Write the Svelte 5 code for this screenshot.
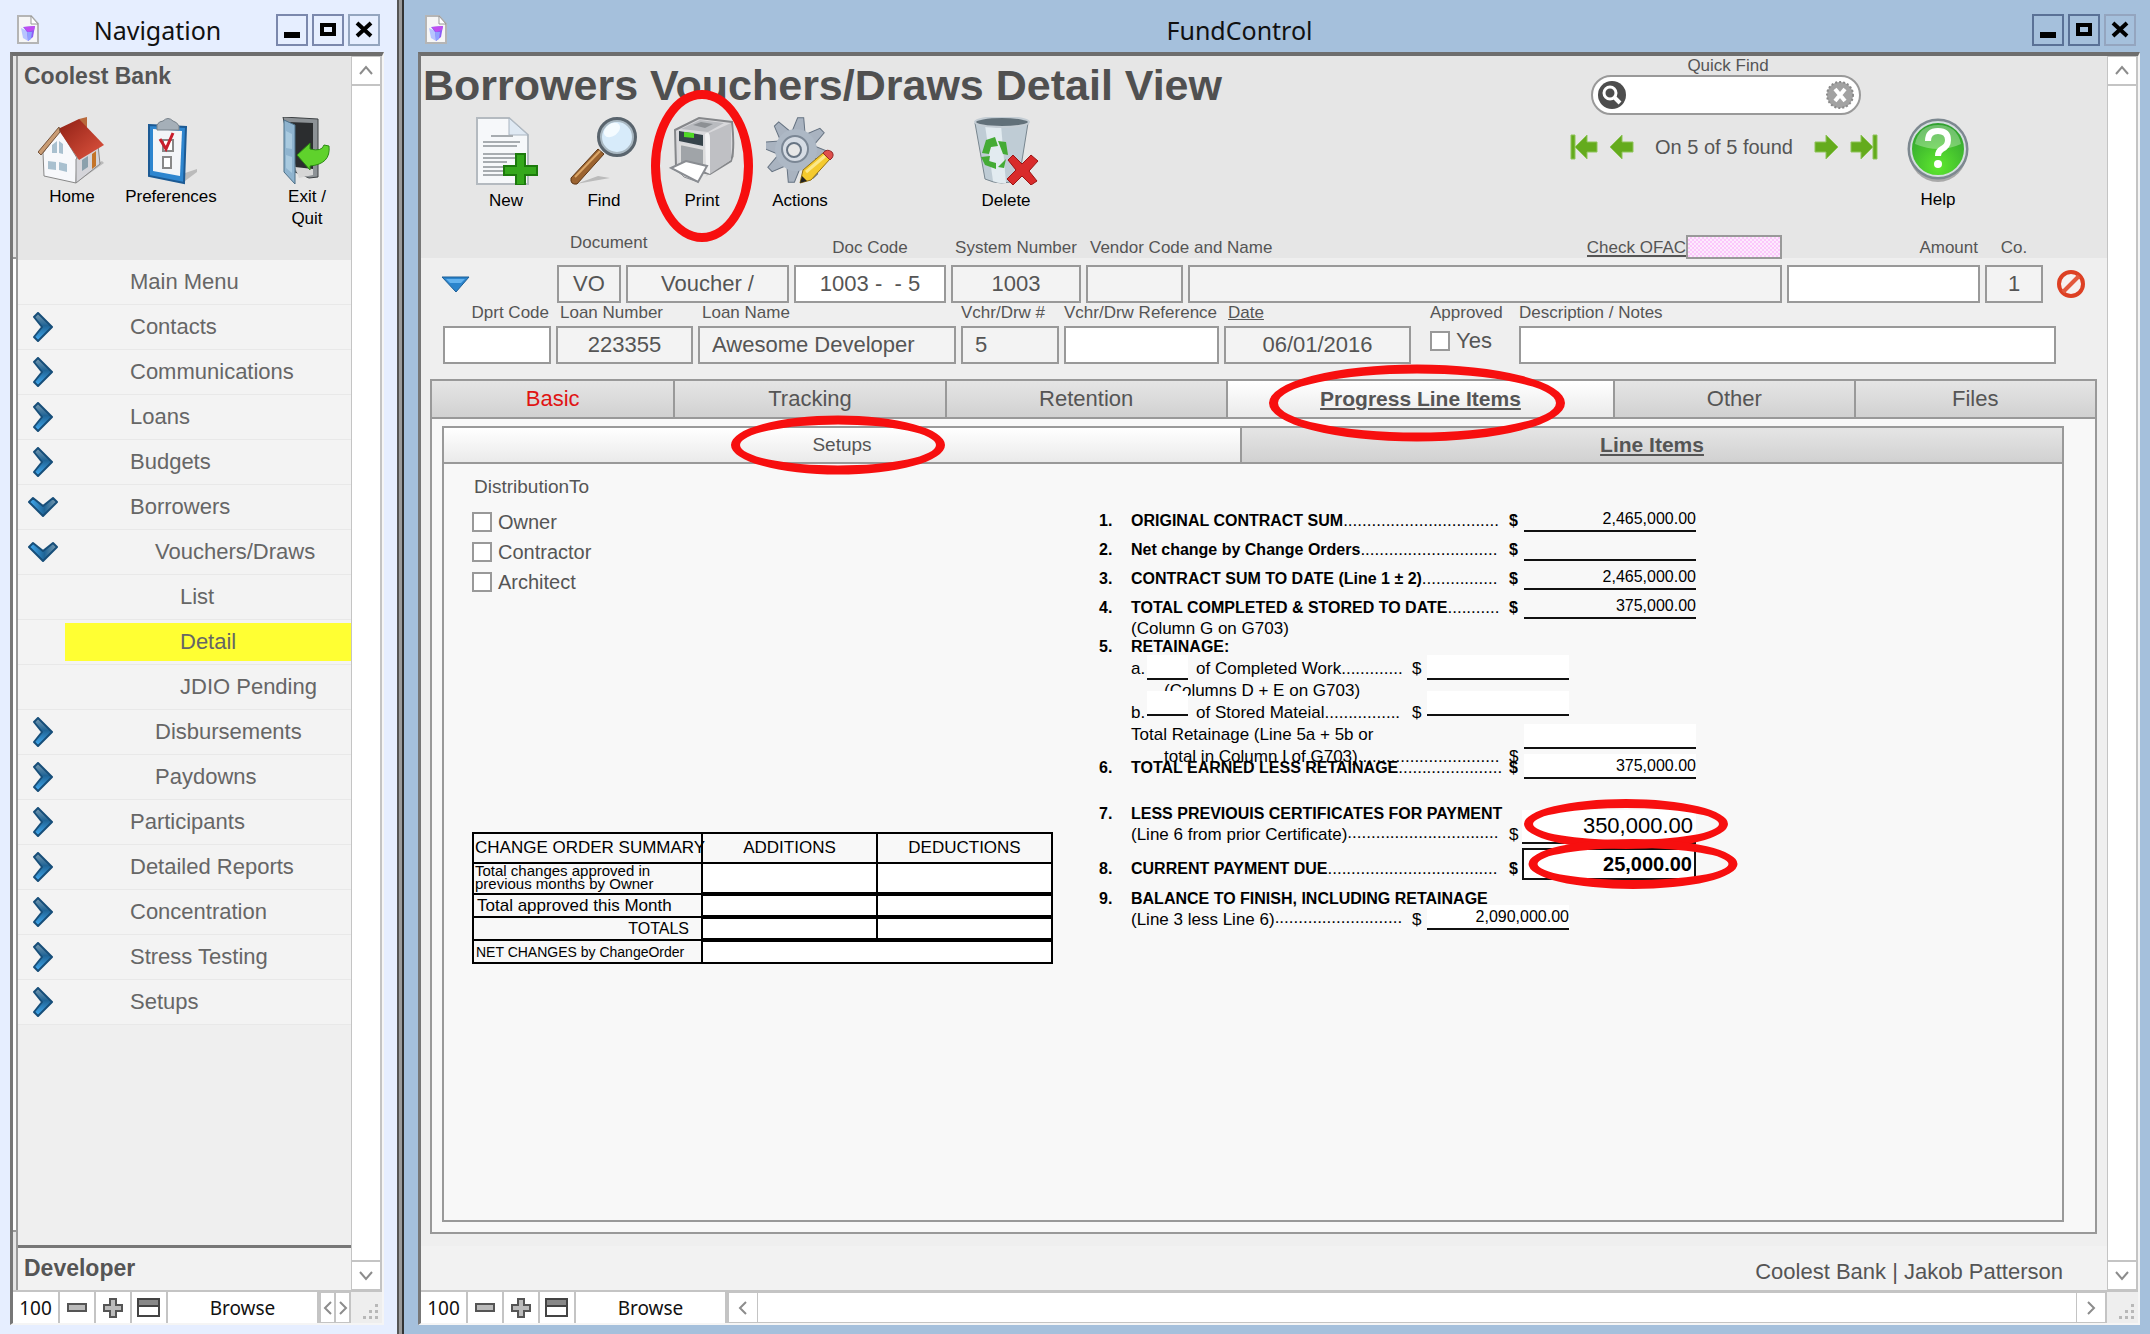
<script>
  let menu = [
    { label: 'Main Menu', level: 0, arrow: '' },
    { label: 'Contacts', level: 0, arrow: 'right' },
    { label: 'Communications', level: 0, arrow: 'right' },
    { label: 'Loans', level: 0, arrow: 'right' },
    { label: 'Budgets', level: 0, arrow: 'right' },
    { label: 'Borrowers', level: 0, arrow: 'down' },
    { label: 'Vouchers/Draws', level: 1, arrow: 'down' },
    { label: 'List', level: 2, arrow: '' },
    { label: 'Detail', level: 2, arrow: '' },
    { label: 'JDIO Pending', level: 2, arrow: '' },
    { label: 'Disbursements', level: 1, arrow: 'right' },
    { label: 'Paydowns', level: 1, arrow: 'right' },
    { label: 'Participants', level: 0, arrow: 'right' },
    { label: 'Detailed Reports', level: 0, arrow: 'right' },
    { label: 'Concentration', level: 0, arrow: 'right' },
    { label: 'Stress Testing', level: 0, arrow: 'right' },
    { label: 'Setups', level: 0, arrow: 'right' },
  ];
  let current = $state('Detail');

  let tabs = ['Basic', 'Tracking', 'Retention', 'Progress Line Items', 'Other', 'Files'];
  let activeTab = $state('Progress Line Items');
  let activeSub = $state('Setups');

  const teeth = [0, 45, 90, 135, 180, 225, 270, 315];
  const dots = (n) => '.'.repeat(n);
</script>

{#snippet fileIcon()}
  <svg class="file-icon" width="22" height="30" viewBox="0 0 22 30" aria-hidden="true">
    <path d="M1 1h13l7 8v19H1z" fill="#f6f6f6" stroke="#b5b5b5" stroke-width="2" />
    <path d="M14 1v8h7z" fill="#fff" stroke="#999" />
    <path d="M4 13l6 3 1 10-5-3z" fill="#b7c4ff" />
    <path d="M6 12l12-1-2 11-5 4-1-9z" fill="#8b5cf6" />
    <path d="M7 12l11-1-1 4-6 2z" fill="#c04df0" />
    <path d="M10 17l5 0-1 7-3 2z" fill="#8fa2ff" />
  </svg>
{/snippet}

{#snippet winButtons()}
  <div class="win-buttons">
    <button aria-label="Minimize"><svg width="28" height="28"><path d="M6 16h16v6H6z" /></svg></button>
    <button aria-label="Maximize"><svg width="28" height="28"><path d="M6 7h16v13H6zM10 11v5h8v-5z" fill-rule="evenodd" /></svg></button>
    <button class="close" aria-label="Close"><svg width="28" height="28"><path d="M7 7l14 13M21 7L7 20" stroke="#000" stroke-width="4" /></svg></button>
  </div>
{/snippet}

{#snippet scrollbar()}
  <div class="scrollbar">
    <button aria-label="Scroll up"><svg width="16" height="12"><path d="M2 9l6-7 6 7" /></svg></button>
    <button aria-label="Scroll down"><svg width="16" height="12"><path d="M2 2l6 7 6-7" /></svg></button>
  </div>
{/snippet}

{#snippet zoomTools()}
  <span class="zoom">100</span>
  <button aria-label="Zoom out"><svg width="20" height="10"><rect x="1" y="1" width="18" height="7" fill="#bbb" stroke="#555" stroke-width="2" /></svg></button>
  <button aria-label="Zoom in"><svg width="20" height="20"><path d="M7 1h6v6h6v6h-6v6H7v-6H1V7h6z" fill="#bbb" stroke="#555" stroke-width="2" /></svg></button>
  <button aria-label="Toggle toolbar"><svg width="24" height="20"><rect x="1" y="1" width="21" height="17" fill="#fff" stroke="#444" stroke-width="2" /><path d="M2 2h19v5H2z" fill="#888" /><path d="M1 8h21" stroke="#444" stroke-width="2" /></svg></button>
  <button class="mode">Browse</button>
{/snippet}

{#snippet corner()}
  <svg class="corner" width="31" height="31" aria-hidden="true">
    {#each [[24, 12], [18, 18], [24, 18], [12, 24], [18, 24], [24, 24]] as [x, y]}
      <rect {x} {y} width="3" height="3" fill="#b8b8b8" />
    {/each}
  </svg>
{/snippet}

<div class="desktop">
  <!-- Navigation window -->
  <section class="window nav">
    <header class="titlebar">
      {@render fileIcon()}
      <span class="wintitle">Navigation</span>
      {@render winButtons()}
    </header>
    <div class="frame">
      <div class="view">
        <div class="rail"><i></i><b></b><i class="short"></i></div>
        <div class="nav-body">
          <div class="nav-head">
            <h2>Coolest Bank</h2>
            <div class="nav-tools">
              <button class="tool home">
                <svg width="68" height="68" viewBox="0 0 68 68">
                  <defs>
                    <linearGradient id="roof" x1="0" y1="0" x2="1" y2="1"><stop offset="0" stop-color="#8e1f14" /><stop offset="1" stop-color="#e05540" /></linearGradient>
                  </defs>
                  <path d="M38 66l28-20-2-2-26 14z" fill="#bbb" />
                  <path d="M41 2l8-2v12l-8-4z" fill="#b96a3c" />
                  <path d="M5 36L22 13l17 28-1 25L6 59z" fill="#f7f8fb" stroke="#888" />
                  <path d="M38 42l22-14 2 19-24 19z" fill="#d5d5da" stroke="#888" />
                  <path d="M20 12L41 2l25 26-25 15z" fill="url(#roof)" />
                  <path d="M21 10L0 35l3 3L22 15z" fill="#c99c74" stroke="#76543c" />
                  <path d="M14 28l5-4v12h-5zM21 24l4 3v10l-4-1zM10 44l8 1v8l-8-1zM21 45l8 2v8l-8-2z" fill="#a9c0cf" />
                  <path d="M44 43l6-4v11l-6 4z" fill="#8aa0ac" /><path d="M54 37l4-3v15l-4 3z" fill="#c47428" />
                </svg>
                Home
              </button>
              <button class="tool prefs">
                <svg width="52" height="68" viewBox="0 0 52 68">
                  <path d="M40 64l12-9v-3l-12 4z" fill="#bbb" />
                  <path d="M4 8l37 2-2 56L4 59z" fill="#2f86cf" stroke="#1c5a94" stroke-width="2" />
                  <path d="M8 12l29 2-2 45-27-5z" fill="#f3f5f8" />
                  <path d="M12 8q2-4 6-4 5-5 10 0 4 1 6 5v4H12z" fill="#a5afb8" stroke="#77818a" />
                  <path d="M18 23h10v11H18zM18 40h8v11h-8z" fill="#fff" stroke="#888" stroke-width="2" />
                  <path d="M15 22l6 10 7-16" fill="none" stroke="#c81e2c" stroke-width="3" />
                </svg>
                Preferences
              </button>
              <button class="tool exit">
                <svg width="50" height="68" viewBox="0 0 50 68">
                  <path d="M1 0l35 2v58l-9 1-14-6z" fill="#8d9296" stroke="#3c4043" />
                  <path d="M6 5l25 1v49l-17-3z" fill="#2b2d2f" />
                  <path d="M13 50l18 2v6l-14 3z" fill="#d6d6d6" />
                  <path d="M2 3l11 5v59L2 55z" fill="#8fb4cf" stroke="#4d7088" />
                  <path d="M4 14l6 3v15l-6-1zM4 38l6 2v16l-6-5z" fill="#a9cadf" />
                  <path d="M15 38l13-12v6q12 3 14-4l5 1q2 18-19 20v4z" fill="#5fd22c" stroke="#2b8a12" />
                </svg>
                Exit /<br />Quit
              </button>
            </div>
          </div>
          <nav>
            {#each menu as item}
              <button class="row" onclick={() => (current = item.label)}>
                <span class="chev">
                  {#if item.arrow}
                    <svg width="30" height="30" viewBox="0 0 30 30" class={item.arrow}>
                      <defs><linearGradient id="chev" x1="0" y1="0" x2="0" y2="1"><stop offset="0" stop-color="#7c9cb0" /><stop offset="0.45" stop-color="#1f6496" /><stop offset="1" stop-color="#43aef5" /></linearGradient></defs>
                      <path d="M6 5l4-4 14 14-14 14-4-4 8-10z" fill="url(#chev)" stroke="#174e79" stroke-width="2" stroke-linejoin="round" />
                    </svg>
                  {/if}
                </span>
                <span class="item level{item.level}" class:current={item.label === current}>{item.label}</span>
              </button>
            {/each}
          </nav>
          <footer>Developer</footer>
        </div>
        {@render scrollbar()}
      </div>
      <div class="status">
        {@render zoomTools()}
        <div class="hscroll small">
          <button aria-label="Scroll left"><svg width="10" height="16"><path d="M8 2L2 8l6 6" /></svg></button>
          <button aria-label="Scroll right"><svg width="10" height="16"><path d="M2 2l6 6-6 6" /></svg></button>
        </div>
        {@render corner()}
      </div>
    </div>
  </section>

  <div class="divider"></div>

  <!-- FundControl window -->
  <section class="window fund">
    <header class="titlebar">
      {@render fileIcon()}
      <span class="wintitle">FundControl</span>
      {@render winButtons()}
    </header>
    <div class="frame">
      <div class="view">
        <div class="layout">
          <div class="head">
            <div>
              <h1>Borrowers Vouchers/Draws Detail View</h1>
              <div class="toolbar">
                <button class="tool">
                  <svg width="64" height="68" viewBox="0 0 64 68">
                    <path d="M3 1h32l19 17v49H3z" fill="#f6f8fa" stroke="#b4bac0" stroke-width="2" />
                    <path d="M35 1v17h19z" fill="#dfe9f3" stroke="#aab5c0" />
                    <path d="M17 19h22M9 25h37M9 29h34M9 37h36M9 41h32M9 45h24M9 50h22M9 54h22M9 58h22" stroke="#a7acb0" stroke-width="2" />
                    <path d="M42 37h9v12h12v9H51v10h-9V58H30v-9h12z" fill="#35a81c" stroke="#1c7a0c" stroke-width="2" />
                  </svg>
                  New
                </button>
                <button class="tool">
                  <svg width="68" height="68" viewBox="0 0 68 68">
                    <path d="M6 67l34-6-12-2z" fill="#bbb" />
                    <path d="M1 61L28 32l6 5L7 67q-7 1-6-6z" fill="#9b6330" stroke="#5e3716" />
                    <path d="M5 60l25-26" stroke="#dba668" stroke-width="2" />
                    <circle cx="47" cy="20" r="18" fill="#d7ebfa" stroke="#59646d" stroke-width="4" />
                    <circle cx="47" cy="20" r="16" fill="none" stroke="#a9b8c2" stroke-width="2" />
                    <ellipse cx="42" cy="13" rx="9" ry="6" fill="#f4fbff" transform="rotate(-35 42 13)" />
                  </svg>
                  Find
                </button>
                <button class="tool">
                  <svg width="66" height="68" viewBox="0 0 66 68">
                    <path d="M36 60l29-20v-8z" fill="#bbb" />
                    <path d="M6 13L30 1l33 4q3 28-1 39L41 57l-34-7z" fill="#d9d9dc" stroke="#85878a" stroke-width="2" />
                    <path d="M12 12L31 3l24 3-16 9z" fill="#b9bbbf" />
                    <path d="M24 8l8-3 12 2-8 4z" fill="#8d9094" />
                    <path d="M40 16l22-10v37L41 57z" fill="#bfc0c4" />
                    <path d="M10 14l24 4v11l-24-5z" fill="#36434a" />
                    <path d="M15 15l10 1v5l-10-1z" fill="#4fd926" />
                    <path d="M11 27l24 5v21l-24-6z" fill="#a0a4a8" stroke="#ddd" stroke-width="2" />
                    <path d="M36 17q5-4 5 5v35l-4-2z" fill="#f2f2f3" />
                    <path d="M2 51l15-7 21 5-9 16z" fill="#fff" stroke="#8a8d92" stroke-width="2" />
                    <path d="M2 51q10 5 13 9l14 5" fill="none" stroke="#8a8d92" />
                  </svg>
                  Print
                  <span class="ring ring-print"></span>
                </button>
                <button class="tool">
                  <svg width="68" height="68" viewBox="0 0 68 68">
                    <g fill="#a9b3c0" stroke="#667382">
                      {#each teeth as angle}
                        <path d="M23 15l3-14 6-1 4 15z" transform="rotate({angle + 10} 30 33)" />
                      {/each}
                    </g>
                    <circle cx="30" cy="33" r="21" fill="#adb8c5" />
                    <circle cx="29" cy="32" r="13" fill="#d6dce4" stroke="#7b8795" stroke-width="2" />
                    <circle cx="28" cy="33" r="7" fill="#e7e7e7" stroke="#677483" stroke-width="2" />
                    <path d="M34 66l3-13 20-17 7 6-19 21z" fill="#f4ca2e" stroke="#937012" />
                    <path d="M40 55l19-16" stroke="#fbe88a" stroke-width="3" />
                    <path d="M34 66l2-7 5 5z" fill="#222" />
                    <path d="M57 36q4-5 9-1 3 4-2 8z" fill="#e0504c" stroke="#952a2a" />
                  </svg>
                  Actions
                </button>
                <button class="tool delete">
                  <svg width="66" height="68" viewBox="0 0 66 68">
                    <path d="M2 6l10 56q17 8 34 0L55 6z" fill="#bfccd5" stroke="#78868f" />
                    <path d="M12 8l8 56q6 3 13 2L28 8z" fill="#e2ebf0" />
                    <ellipse cx="29" cy="5" rx="27" ry="5" fill="#617079" stroke="#c4cdd4" stroke-width="2" />
                    <path d="M13 23l9-3 3 9-7 1-2 7-7-1zM25 24l8 1 2 13-5-1zM8 40l9-1-1 5 7 2v6l-11-4zM25 50l8-8-2 9z" fill="#44ab35" />
                    <path d="M35 43l5-5 9 9 9-9 7 6-9 10 8 10-6 4-9-9-9 9-6-6 9-9z" fill="#d92b2b" stroke="#9b1414" />
                  </svg>
                  Delete
                </button>
              </div>
            </div>
            <div class="finder">
              <label for="quick">Quick Find</label>
              <div class="search">
                <svg width="30" height="30"><circle cx="15" cy="15" r="14" fill="#4d4d4d" /><circle cx="13" cy="13" r="6" fill="none" stroke="#fff" stroke-width="3" /><path d="M17 17l6 6" stroke="#fff" stroke-width="4" /></svg>
                <input id="quick" type="text" />
                <button aria-label="Clear"><svg width="30" height="30"><circle cx="15" cy="15" r="13" fill="#a2a2a2" stroke="#8a8a8a" stroke-width="2" stroke-dasharray="2 2" /><path d="M10 9l10 12M20 9L10 21" stroke="#fff" stroke-width="4" /></svg></button>
              </div>
              <div class="pager">
                <button aria-label="First"><svg width="28" height="26"><path d="M1 1h4v24H1zM5 13L17 1v7h10v10H17v7z" fill="#64ab1d" stroke="#8fc45b" /></svg></button>
                <button aria-label="Previous"><svg width="25" height="26"><path d="M1 13L13 1v7h11v10H13v7z" fill="#64ab1d" stroke="#8fc45b" /></svg></button>
                <span>On 5 of 5 found</span>
                <button aria-label="Next"><svg width="25" height="26"><path d="M24 13L12 1v7H1v10h11v7z" fill="#64ab1d" stroke="#8fc45b" /></svg></button>
                <button aria-label="Last"><svg width="28" height="26"><path d="M23 1h4v24h-4zM23 13L11 1v7H1v10h10v7z" fill="#64ab1d" stroke="#8fc45b" /></svg></button>
              </div>
            </div>
            <button class="tool help">
              <svg width="64" height="68" viewBox="0 0 64 68">
                <defs>
                  <radialGradient id="help" cx="0.5" cy="0.8" r="0.8"><stop offset="0" stop-color="#5ee82e" /><stop offset="1" stop-color="#2b9a2f" /></radialGradient>
                </defs>
                <ellipse cx="32" cy="36" rx="29" ry="30" fill="#a9a9a9" />
                <circle cx="32" cy="33" r="29" fill="url(#help)" stroke="#7d8890" stroke-width="3" />
                <circle cx="32" cy="33" r="27" fill="none" stroke="#d5dde0" stroke-width="2" />
                <path d="M9 28q4-19 23-19t23 19q-22 10-46 0z" fill="#fff" opacity="0.3" />
                <path d="M22 25q0-10 10-10t10 9q0 6-6 9-4 2-4 7" fill="none" stroke="#fff" stroke-width="6" />
                <circle cx="32" cy="48" r="4" fill="#fff" />
              </svg>
              Help
            </button>
          </div>

          <div class="record first">
            <span></span>
            <label class="doc" for="doc-type">Document</label>
            <label class="mid" for="doc-code">Doc Code</label>
            <label class="mid" for="sys">System Number</label>
            <label for="vendor">Vendor Code and Name</label>
            <div class="ofac"><a href="#ofac">Check OFAC</a><span></span></div>
            <label class="end" for="amount">Amount</label>
            <label class="mid" for="co">Co.</label>
            <span></span>

            <button class="toggle" aria-label="Collapse"><svg width="30" height="18"><path d="M1 2h27L15 17z" fill="#2b84cc" stroke="#1d5e96" /><path d="M5 4h19l-4 4H9z" fill="#63b2ee" /></svg></button>
            <input class="ro mid" id="doc-type" value="VO" readonly />
            <input class="ro mid" aria-label="Document name" value="Voucher /" readonly />
            <input class="mid" id="doc-code" value="1003 -  - 5" />
            <input class="ro mid" id="sys" value="1003" readonly />
            <input class="ro" id="vendor" readonly />
            <input class="ro" aria-label="Vendor name" readonly />
            <input id="amount" />
            <input class="ro mid" id="co" value="1" readonly />
            <button class="void" aria-label="Void"><svg width="30" height="30"><circle cx="15" cy="15" r="12" fill="#f6f1f0" stroke="#dd4023" stroke-width="4" /><path d="M7 23L23 7" stroke="#e2583c" stroke-width="4" /></svg></button>
          </div>

          <div class="record second">
            <label class="end" for="dprt">Dprt Code</label>
            <label for="loan-no">Loan Number</label>
            <label for="loan-name">Loan Name</label>
            <label class="flush" for="draw">Vchr/Drw #</label>
            <label class="flush" for="ref">Vchr/Drw Reference</label>
            <label for="date"><u>Date</u></label>
            <span class="approved-label">Approved</span>
            <label class="flush" for="notes">Description / Notes</label>

            <input id="dprt" />
            <input class="ro mid" id="loan-no" value="223355" readonly />
            <input class="ro text" id="loan-name" value="Awesome Developer" readonly />
            <input class="ro text" id="draw" value="5" readonly />
            <input id="ref" />
            <input class="ro mid" id="date" value="06/01/2016" readonly />
            <label class="check approved"><input type="checkbox" /> Yes</label>
            <input id="notes" />
          </div>

          <div class="panel">
            <div class="tabs">
              {#each tabs as tab, i}
                <button class="tab t{i}" class:active={tab === activeTab} onclick={() => (activeTab = tab)}>
                  {tab}
                  {#if i === 3}<span class="ring ring-progress"></span>{/if}
                </button>
              {/each}
            </div>
            <div class="inner">
              <div class="subtabs">
                <button class:active={activeSub === 'Setups'} onclick={() => (activeSub = 'Setups')}>
                  Setups
                  <span class="ring ring-setups"></span>
                </button>
                <button class="strong" class:active={activeSub === 'Line Items'} onclick={() => (activeSub = 'Line Items')}>Line Items</button>
              </div>
              <div class="sheet">
                <div class="left">
                  <fieldset>
                    <legend>DistributionTo</legend>
                    <label class="check"><input type="checkbox" /> Owner</label>
                    <label class="check"><input type="checkbox" /> Contractor</label>
                    <label class="check"><input type="checkbox" /> Architect</label>
                  </fieldset>
                  <table>
                    <thead>
                      <tr><th class="summary">CHANGE ORDER SUMMARY</th><th>ADDITIONS</th><th>DEDUCTIONS</th></tr>
                    </thead>
                    <tbody>
                      <tr class="tall"><td><div class="changes">Total changes approved in previous months by Owner</div></td><td></td><td></td></tr>
                      <tr><td>Total approved this Month</td><td></td><td></td></tr>
                      <tr><td class="totals">TOTALS</td><td></td><td></td></tr>
                      <tr><td class="net">NET CHANGES by ChangeOrder</td><td colspan="2"></td></tr>
                    </tbody>
                  </table>
                </div>

                <div class="cert">
                  <div class="line main"><b class="n">1.</b><b>ORIGINAL CONTRACT SUM</b><span class="dots">{dots(33)}</span><b class="cur">$</b><input aria-label="Original contract sum" value="2,465,000.00" /></div>
                  <div class="line main"><b class="n">2.</b><b>Net change by Change Orders</b><span class="dots">{dots(29)}</span><b class="cur">$</b><input aria-label="Net change" /></div>
                  <div class="line main"><b class="n">3.</b><b>CONTRACT SUM TO DATE (Line 1 ± 2)</b><span class="dots">{dots(16)}</span><b class="cur">$</b><input aria-label="Contract sum to date" value="2,465,000.00" /></div>
                  <div class="line main"><b class="n">4.</b><b>TOTAL COMPLETED &amp; STORED TO DATE</b><span class="dots">{dots(11)}</span><b class="cur">$</b><input aria-label="Total completed" value="375,000.00" /></div>
                  <div class="line note"><span>(Column G on G703)</span></div>
                  <div class="line head5"><b class="n">5.</b><b>RETAINAGE:</b></div>
                  <div class="line sub short"><span class="ab">a.</span><input class="pct white" aria-label="Percent of completed work" /><span>of Completed Work</span><span class="dots">{dots(13)}</span><span class="cur">$</span><input class="white" aria-label="Completed work" /></div>
                  <div class="line sub deep"><span>(Columns D + E on G703)</span></div>
                  <div class="line sub short raised"><span class="ab">b.</span><input class="pct white" aria-label="Percent of stored material" /><span>of Stored Mateial</span><span class="dots">{dots(16)}</span><span class="cur">$</span><input class="white" aria-label="Stored material" /></div>
                  <div class="line sub drop"><span>Total Retainage (Line 5a + 5b or</span><input class="white" aria-label="Total retainage" /></div>
                  <div class="line sub deep"><span>total in Column I of G703)</span><span class="dots">{dots(30)}</span><span class="cur">$</span><span class="blank"></span></div>
                  <div class="line six"><b class="n">6.</b><b>TOTAL EARNED LESS RETAINAGE</b><span class="dots">{dots(22)}</span><b class="cur">$</b><input class="white" aria-label="Total earned less retainage" value="375,000.00" /></div>
                  <div class="line seven"><b class="n">7.</b><b>LESS PREVIOUIS CERTIFICATES FOR PAYMENT</b></div>
                  <div class="line note"><span>(Line 6 from prior Certificate)</span><span class="dots">{dots(32)}</span><span class="cur">$</span>
                    <span class="big"><input class="white" aria-label="Previous certificates" value="350,000.00" /><span class="ring ring-prev"></span></span>
                  </div>
                  <div class="line eight"><b class="n">8.</b><b>CURRENT PAYMENT DUE</b><span class="dots">{dots(36)}</span><b class="cur">$</b>
                    <span class="due"><input class="white" aria-label="Current payment due" value="25,000.00" /><span class="ring ring-due"></span></span>
                  </div>
                  <div class="line nine"><b class="n">9.</b><b>BALANCE TO FINISH, INCLUDING RETAINAGE</b></div>
                  <div class="line note short"><span>(Line 3 less Line 6)</span><span class="dots">{dots(27)}</span><span class="cur">$</span><input class="white" aria-label="Balance to finish" value="2,090,000.00" /></div>
                </div>
              </div>
            </div>
          </div>
          <footer>Coolest Bank | Jakob Patterson</footer>
        </div>
        {@render scrollbar()}
      </div>
      <div class="status">
        {@render zoomTools()}
        <div class="hscroll">
          <button aria-label="Scroll left"><svg width="10" height="16"><path d="M8 2L2 8l6 6" /></svg></button>
          <button aria-label="Scroll right"><svg width="10" height="16"><path d="M2 2l6 6-6 6" /></svg></button>
        </div>
        {@render corner()}
      </div>
    </div>
  </section>
</div>

<style>
  :global(body) {
    margin: 0;
  }

  * {
    box-sizing: border-box;
  }

  .desktop {
    display: grid;
    grid-template-columns: 397px 7px minmax(0, 1fr);
    min-height: 100vh;
    font-family: 'Liberation Sans', Arial, sans-serif;
    font-size: 22px;
    color: #555;
  }

  button,
  input {
    font: inherit;
    color: inherit;
    margin: 0;
    padding: 0;
    border: 0;
    background: none;
    border-radius: 0;
  }

  svg {
    display: block;
    flex: none;
  }

  .divider {
    background: #9a9a9a;
    border-left: 2px solid #555;
    border-right: 2px solid #333;
  }

  .window {
    display: flex;
    flex-direction: column;
    min-width: 0;
  }

  .nav {
    background: #e6eeff;
    padding: 0 13px 9px 10px;
  }

  .fund {
    background: #a5c0dc;
    padding: 0 10px 9px 14px;
  }

  .titlebar {
    display: flex;
    align-items: center;
    height: 52px;
    padding: 8px 4px 0 0;
    font-family: 'Noto Sans', 'Open Sans', sans-serif;
    font-size: 25px;
    color: #111;
  }

  .file-icon {
    margin-left: 7px;
  }

  .wintitle {
    flex: 1;
    text-align: center;
  }

  .win-buttons {
    display: flex;
    gap: 4px;
  }

  .win-buttons button {
    border: 2px solid #7b88ad;
  }

  .fund .win-buttons button {
    border-color: #5a7196;
  }

  .win-buttons .close,
  .fund .win-buttons .close {
    border-color: #94a5bf;
  }

  .frame {
    flex: 1;
    display: flex;
    flex-direction: column;
    border: solid #777;
    border-width: 4px 2px 2px 3px;
    border-top-color: #6e6e6e;
    border-right-color: #f5f5f5;
    border-bottom-color: #f5f5f5;
  }

  .view {
    flex: 1;
    display: flex;
    min-height: 0;
  }

  .scrollbar {
    display: flex;
    flex-direction: column;
    justify-content: space-between;
    width: 31px;
    background: #fff;
    border: solid #c4c4c4;
    border-width: 1px 2px 1px 1px;
  }

  .scrollbar button {
    display: grid;
    place-items: center;
    height: 29px;
    border-bottom: 2px solid #c4c4c4;
  }

  .scrollbar button:last-child {
    border-top: 2px solid #c4c4c4;
    border-bottom: 0;
  }

  .scrollbar path,
  .hscroll path {
    fill: none;
    stroke: #8c8c8c;
    stroke-width: 2;
  }

  .status {
    display: flex;
    height: 33px;
    background: #fff;
    border-top: 2px solid #c4c4c4;
    font-family: 'Noto Sans', 'Open Sans', sans-serif;
    font-size: 19px;
    color: #111;
  }

  .status > button,
  .zoom {
    display: grid;
    place-items: center;
    width: 36px;
    border-right: 2px solid #c4c4c4;
  }

  .status .zoom {
    width: 47px;
  }

  .status .mode {
    width: 151px;
  }

  .hscroll {
    flex: 1;
    display: flex;
    justify-content: space-between;
    border: 1px solid #c4c4c4;
  }

  .hscroll button {
    display: grid;
    place-items: center;
    width: 30px;
    border: solid #c4c4c4;
    border-width: 0 1px;
  }

  .hscroll.small button {
    width: 50%;
    min-width: 0;
  }

  .corner {
    background: #eee;
  }

  .rail {
    display: flex;
    flex-direction: column;
    width: 5px;
    border-right: 2px solid #999;
    background: #e6e6e6;
  }

  .rail i {
    height: 201px;
  }

  .rail i.short {
    height: 58px;
  }

  .rail b {
    flex: 1;
    background: #fff;
    border: solid #999;
    border-width: 2px 0;
  }

  .nav-body {
    flex: 1;
    display: flex;
    flex-direction: column;
    min-width: 0;
    background: #efefef;
  }

  .nav-head {
    height: 204px;
    background: #e6e6e6;
  }

  h2 {
    margin: 0;
    padding: 7px 6px 0;
    font-size: 23px;
    line-height: 26px;
  }

  .tool {
    position: relative;
    display: flex;
    flex-direction: column;
    align-items: center;
    font-size: 17px;
    line-height: 22px;
    color: #000;
    text-align: center;
  }

  .nav-tools {
    display: flex;
    align-items: flex-start;
    padding: 28px 16px 0 12px;
  }

  .nav-tools .tool svg {
    margin-bottom: 1px;
  }

  .home {
    width: 84px;
  }

  .prefs {
    width: 106px;
    margin-left: 4px;
  }

  .exit {
    width: 56px;
    margin-left: auto;
  }

  .row {
    display: flex;
    align-items: center;
    width: 100%;
    height: 45px;
    padding: 0;
    background: #f3f3f3;
    border-bottom: 1px solid #e8e8e8;
    text-align: left;
  }

  .chev {
    width: 47px;
    padding-left: 10px;
  }

  .chev .down {
    transform: rotate(90deg);
  }

  .item {
    flex: 1;
    line-height: 38px;
    padding-left: 65px;
    font-size: 22px;
    color: #666;
  }

  .item.level1 {
    padding-left: 90px;
  }

  .item.level2 {
    padding-left: 115px;
  }

  .item.current {
    background: #ffff33;
  }

  .nav-body footer {
    margin-top: auto;
    height: 45px;
    padding: 7px 6px;
    background: #f2f2f2;
    border-top: 3px solid #777;
    font-size: 23px;
    line-height: 26px;
    font-weight: bold;
  }

  .layout {
    flex: 1;
    display: flex;
    flex-direction: column;
    min-width: 0;
    background: linear-gradient(#e6e6e6 202px, #efefef 202px);
  }

  .head {
    display: flex;
    height: 182px;
    padding: 0 136px 0 2px;
  }

  h1 {
    margin: 0;
    padding-top: 2px;
    font-size: 43px;
    line-height: 54px;
    white-space: nowrap;
    color: #505050;
  }

  .toolbar {
    display: flex;
    padding: 5px 0 0 34px;
  }

  .toolbar .tool {
    width: 98px;
  }

  .toolbar .tool svg,
  .help svg {
    margin-bottom: 5px;
  }

  .toolbar .delete {
    margin-left: 108px;
  }

  .finder {
    width: 314px;
    margin-left: auto;
    padding-top: 1px;
    display: flex;
    flex-direction: column;
    align-items: center;
    font-size: 17px;
    line-height: 18px;
  }

  .finder label {
    padding-left: 8px;
  }

  .search {
    display: flex;
    align-items: center;
    width: 270px;
    height: 40px;
    margin-left: 4px;
    padding: 0 4px;
    border: 2px solid #999;
    border-radius: 20px;
    background: #fff;
  }

  .search input {
    flex: 1;
    min-width: 0;
    height: 32px;
    outline: 0;
  }

  .pager {
    display: flex;
    align-items: center;
    gap: 11px;
    padding-top: 19px;
    font-size: 20px;
    white-space: nowrap;
  }

  .pager span {
    padding: 0 10px;
  }

  .help {
    margin: 60px 0 0 24px;
    width: 66px;
    height: 96px;
  }

  .record {
    display: grid;
    column-gap: 5px;
    font-size: 17px;
  }

  .record > label,
  .approved-label {
    line-height: 20px;
    padding-left: 4px;
    white-space: nowrap;
  }

  .record > .flush {
    padding-left: 0;
  }

  .record > .end {
    text-align: right;
    padding-right: 2px;
  }

  .record .mid {
    text-align: center;
    padding: 0;
  }

  .record > input {
    width: 100%;
    min-width: 0;
    height: 38px;
    border: 2px solid #999;
    background: #fff;
    font-size: 22px;
    outline: 0;
  }

  .record > .ro {
    background: #f3f3f3;
  }

  .record > .text {
    padding-left: 12px;
  }

  .first {
    grid-template-columns: 111px 64px 163px 152px 130px 97px minmax(0, 1fr) 193px 58px 38px;
    grid-template-rows: 27px 38px;
    padding: 0 21px 0 20px;
  }

  .first .doc {
    grid-column: span 2;
    margin-top: -5px;
    padding-left: 13px;
  }

  .ofac {
    display: flex;
    justify-content: flex-end;
    height: 20px;
    line-height: 19px;
  }

  .ofac a {
    height: 19px;
    color: inherit;
    text-decoration: none;
    border-bottom: 2px solid #555;
  }

  .ofac span {
    width: 96px;
    height: 24px;
    margin-top: -3px;
    border: 2px solid #999;
    background: repeating-conic-gradient(#fbc8fb 0 25%, #fdeafd 0 50%) 0 0 / 4px 4px;
  }

  .toggle {
    justify-self: start;
  }

  .void {
    padding-left: 8px;
  }

  .second {
    grid-template-columns: 108px 137px 258px 98px 155px 187px 98px minmax(0, 1fr);
    grid-template-rows: 23px 38px;
    padding: 0 51px 0 22px;
  }

  .record > .approved-label,
  .record > .approved {
    padding-left: 14px;
  }

  .check {
    display: flex;
    align-items: center;
    gap: 6px;
    height: 30px;
    font-size: 20px;
  }

  .check input {
    appearance: none;
    width: 20px;
    height: 20px;
    border: 2px solid #999;
    background: #fff;
  }

  .approved {
    font-size: 22px;
  }

  .panel {
    flex: 1;
    display: flex;
    flex-direction: column;
    margin: 15px 10px 0 9px;
    border: 2px solid #999;
    background: #f8f8f8;
  }

  .tabs {
    display: flex;
    height: 38px;
    border-bottom: 2px solid #999;
  }

  .tab,
  .subtabs button {
    position: relative;
    min-width: 0;
    background: linear-gradient(#e5e5e5, #d1d1d1);
    border-right: 2px solid #999;
    white-space: nowrap;
  }

  .tab:last-child,
  .subtabs button:last-child {
    border-right: 0;
  }

  .tab.active,
  .subtabs button.active {
    background: linear-gradient(#fff, #eaeaea);
  }

  .tab.active {
    font-weight: bold;
    font-size: 21px;
    text-decoration: underline;
  }

  .t0 {
    flex: 243;
    color: #e01414;
  }

  .t1 {
    flex: 271;
  }

  .t2 {
    flex: 281;
  }

  .t3 {
    flex: 388;
  }

  .t4 {
    flex: 240;
  }

  .t5 {
    flex: 241;
  }

  .inner {
    flex: 1;
    margin: 7px 31px 10px 10px;
    border: 2px solid #999;
  }

  .subtabs {
    display: flex;
    height: 36px;
    border-bottom: 2px solid #999;
  }

  .subtabs button {
    flex: 798;
    font-size: 19px;
  }

  .subtabs .strong {
    flex: 822;
    font-size: 21px;
    font-weight: bold;
    text-decoration: underline;
  }

  .sheet {
    display: flex;
    padding: 13px 28px 20px;
  }

  .left {
    width: 581px;
    margin-right: 46px;
  }

  fieldset {
    margin: 0 0 235px;
    padding: 10px 0 0;
    border: 0;
  }

  legend {
    padding: 0 2px;
    font-size: 19px;
    line-height: 20px;
  }

  table {
    width: 100%;
    table-layout: fixed;
    border-collapse: collapse;
    font-size: 17px;
    color: #000;
  }

  th,
  td {
    height: 23px;
    padding: 0;
    border: 2px solid #000;
    background: #fff;
    font-weight: normal;
    line-height: 18px;
    white-space: nowrap;
  }

  tbody td + td {
    border-bottom-width: 4px;
  }

  tbody tr:last-child td {
    border-bottom-width: 2px;
  }

  th {
    height: 30px;
    background: #f8f8f8;
  }

  .summary {
    width: 229px;
    text-align: left;
    padding-left: 1px;
  }

  td:first-child {
    padding-left: 3px;
    background: #f8f8f8;
  }

  .tall td {
    height: 31px;
  }

  td .changes {
    height: 29px;
    margin-left: -2px;
    font-size: 15px;
    line-height: 13px;
    white-space: normal;
  }

  td.totals {
    padding-right: 12px;
    font-size: 16px;
    text-align: right;
  }

  td.net {
    padding-left: 2px;
    font-size: 14px;
  }

  .cert {
    width: 597px;
    padding-top: 26px;
    font-size: 17px;
    color: #000;
  }

  .line {
    display: flex;
    align-items: flex-end;
    height: 22px;
    line-height: 22px;
    white-space: nowrap;
  }

  .line b {
    font-size: 16px;
  }

  .line .n {
    width: 32px;
  }

  .line.main {
    height: 29px;
  }

  .dots {
    flex: 1;
    min-width: 0;
    height: 22px;
    margin-right: 6px;
  }

  .line .cur {
    width: 15px;
  }

  .line input {
    width: 172px;
    height: 25px;
    border-bottom: 2px solid #111;
    font-size: 16px;
    text-align: right;
    outline: 0;
  }

  .line .white {
    position: relative;
    background: #fff;
  }

  .line.short {
    padding-right: 127px;
  }

  .line.short input {
    width: 142px;
  }

  .line.note {
    height: 20px;
    padding-left: 32px;
    line-height: 20px;
  }

  .head5 {
    height: 19px;
  }

  .sub {
    padding-left: 32px;
  }

  .sub.deep {
    padding-left: 65px;
  }

  .sub .ab {
    width: 16px;
  }

  .line.short .pct {
    width: 41px;
    margin-right: 8px;
  }

  .raised input {
    margin-bottom: 8px;
  }

  .drop {
    align-items: flex-start;
    justify-content: space-between;
  }

  .blank {
    width: 172px;
  }

  .six {
    margin-top: -11px;
  }

  .seven {
    margin-top: 24px;
  }

  .big,
  .due {
    position: relative;
    width: 174px;
    margin-left: -2px;
  }

  .big {
    height: 35px;
  }

  .big input {
    display: block;
    width: 100%;
    height: 34px;
    padding-right: 3px;
    font-size: 22px;
  }

  .line.eight {
    height: 34px;
    margin-top: 1px;
  }

  .due {
    height: 32px;
  }

  .due input {
    display: block;
    width: 100%;
    height: 32px;
    padding-right: 2px;
    border: 2px solid #111;
    font-size: 20px;
    font-weight: bold;
  }

  .nine {
    margin-top: 8px;
  }

  .layout footer {
    height: 56px;
    padding: 24px 44px 0;
    line-height: 28px;
    text-align: right;
    background: linear-gradient(#efefef 12px, #f2f2f2 12px);
  }

  /* hand-drawn style markers that sit on top of their targets */
  .ring {
    position: absolute;
    z-index: 2;
    left: 50%;
    top: 50%;
    transform: translate(-50%, -50%);
    border: 9px solid #f70f0f;
    border-radius: 50%;
    pointer-events: none;
  }

  .ring-print {
    width: 102px;
    height: 152px;
    top: 52%;
  }

  .ring-progress {
    width: 296px;
    height: 77px;
    left: 49%;
    top: 60%;
  }

  .ring-setups {
    width: 214px;
    height: 59px;
    left: calc(50% - 4px);
  }

  .ring-prev {
    width: 204px;
    height: 50px;
    left: 104px;
    top: 14px;
  }

  .ring-due {
    width: 209px;
    height: 50px;
    left: 111px;
  }
</style>
